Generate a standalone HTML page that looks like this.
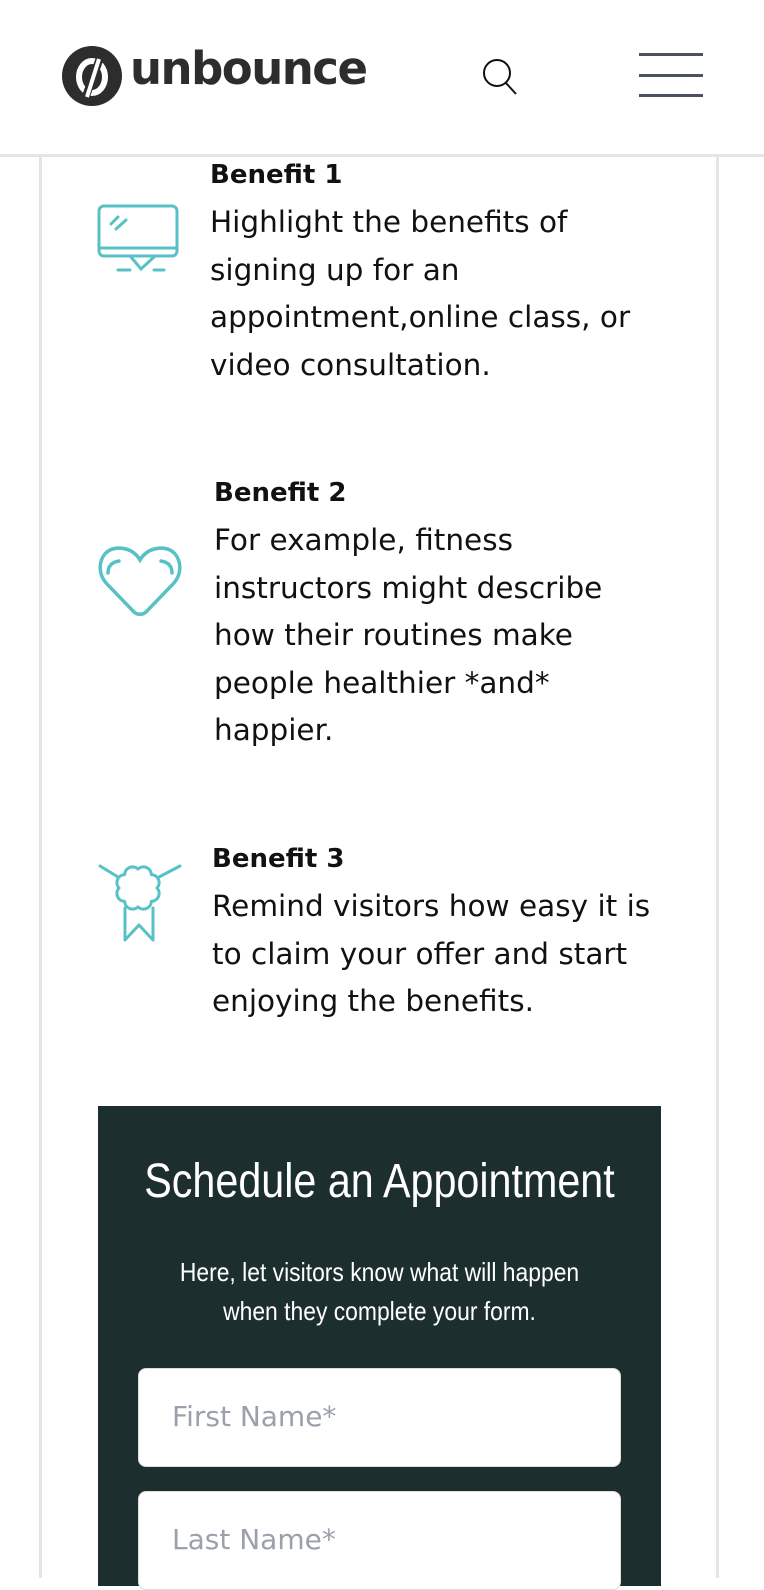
<!DOCTYPE html>
<html><head><meta charset="utf-8"><style>
*{margin:0;padding:0;box-sizing:border-box}
body{width:764px;height:1578px;overflow:hidden;background:#fff;font-family:"Liberation Sans",sans-serif;position:relative;color:#000}
.hdr{position:absolute;left:0;top:0;width:764px;height:157px;background:#fff;border-bottom:3px solid #e4e5ea;z-index:2}
.vl{position:absolute;top:157px;bottom:0;width:3px;background:#e4e5ea}
.t{position:absolute;font-family:"DejaVu Sans",sans-serif;font-size:29.5px;line-height:47.5px;color:#111;white-space:nowrap}
.t b{display:block;font-size:26px;font-weight:bold;line-height:24px;margin-bottom:12px}
.form{position:absolute;left:98px;top:1106px;width:563px;height:480px;background:#1c2e2d;color:#fff;text-align:center}
.h{position:absolute;left:0;width:563px;top:48px;font-size:48px;transform:scaleX(0.86)}
.s{position:absolute;left:0;width:563px;top:147px;font-size:26px;line-height:39px;transform:scaleX(0.88)}
.in{position:absolute;left:40px;width:483px;height:99px;background:#fff;border-radius:8px;border:1px solid #ddd;color:#9aa1ad;font-family:"DejaVu Sans",sans-serif;font-size:28px;text-align:left;padding:31px 0 0 33px}
</style></head><body>
<div class="hdr">
<svg style="position:absolute;left:61px;top:45px" width="62" height="62" viewBox="0 0 62 62"><circle cx="31" cy="31" r="30" fill="#2d2d2d"/><ellipse cx="31" cy="32" rx="13" ry="16" fill="none" stroke="#fff" stroke-width="6"/><path d="M40 10 L24 54" stroke="#2d2d2d" stroke-width="8"/><path d="M38 14 L26 52" stroke="#fff" stroke-width="4"/></svg>
<div style="position:absolute;left:130px;top:42px;font-family:'DejaVu Sans',sans-serif;font-size:45px;font-weight:bold;color:#2d2d2d;letter-spacing:-1.5px">unbounce</div>
<svg style="position:absolute;left:480px;top:57px" width="40" height="40" viewBox="0 0 40 40"><circle cx="17" cy="16" r="13" fill="none" stroke="#111" stroke-width="2"/><path d="M26 26 L36 37" stroke="#111" stroke-width="2"/></svg>
<div style="position:absolute;left:639px;top:53px;width:64px;height:3px;background:#4a5160"></div>
<div style="position:absolute;left:639px;top:74px;width:64px;height:3px;background:#4a5160"></div>
<div style="position:absolute;left:639px;top:94px;width:64px;height:3px;background:#4a5160"></div>
</div>
<div class="vl" style="left:39px"></div>
<div class="vl" style="left:716px"></div>

<svg style="position:absolute;left:96px;top:203px" width="84" height="72" viewBox="0 0 84 72" fill="none" stroke="#58c1c6" stroke-width="3" stroke-linecap="round"><rect x="3" y="3" width="78" height="50" rx="5"/><path d="M4 45 H80"/><path d="M15 21 L22 14 M20 26 L30 17"/><path d="M35 54 L45 66 L58 54 M22 67 H34 M58 67 H68"/></svg>
<div class="t" style="left:210px;top:163px"><b>Benefit 1</b>Highlight the benefits of<br>signing up for an<br>appointment,online class, or<br>video consultation.</div>

<svg style="position:absolute;left:97px;top:546px" width="86" height="72" viewBox="0 0 86 72" fill="none" stroke="#58c1c6" stroke-width="3.5" stroke-linecap="round"><path d="M43 14 C36 2 22 0 13 4 C3 9 -1 25 9 37 L37 66 C40 69 46 69 49 66 L77 37 C87 25 83 9 73 4 C64 0 50 2 43 14 Z"/><path d="M11 27 C11 20 15 16 22 15 M64 15 C71 16 75 20 75 27"/></svg>
<div class="t" style="left:214px;top:481px"><b>Benefit 2</b>For example, fitness<br>instructors might describe<br>how their routines make<br>people healthier *and*<br>happier.</div>

<svg style="position:absolute;left:97px;top:858px" width="86" height="86" viewBox="0 0 86 86" fill="none" stroke="#58c1c6" stroke-width="3" stroke-linecap="round" stroke-linejoin="round"><path d="M60 30 A8 8 0 0 1 54.4 43.4 A8 8 0 0 1 41 49 A8 8 0 0 1 27.6 43.4 A8 8 0 0 1 22 30 A8 8 0 0 1 27.6 16.6 A8 8 0 0 1 41 11 A8 8 0 0 1 54.4 16.6 A8 8 0 0 1 60 30 Z"/><path d="M3 8 L21 19 M83 8 L62 19"/><path d="M28 50 V82 L42 67 L56 82 V50"/></svg>
<div class="t" style="left:212px;top:847px"><b>Benefit 3</b>Remind visitors how easy it is<br>to claim your offer and start<br>enjoying the benefits.</div>

<div class="form">
<div class="h">Schedule an Appointment</div>
<div class="s">Here, let visitors know what will happen<br>when they complete your form.</div>
<div class="in" style="top:262px">First Name*</div>
<div class="in" style="top:385px">Last Name*</div>
</div>
</body></html>
